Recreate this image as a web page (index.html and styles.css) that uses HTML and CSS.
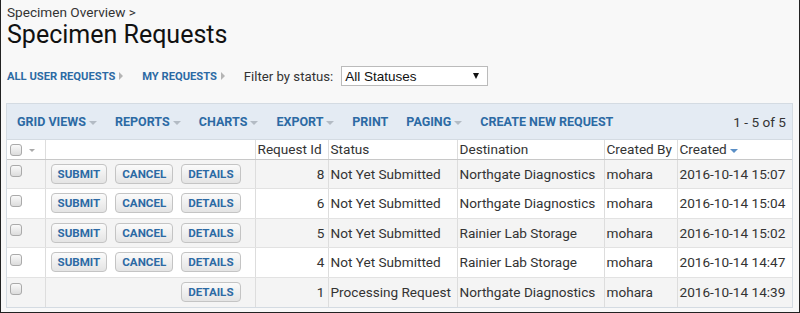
FILE: index.html
```html
<!DOCTYPE html>
<html>
  <head>
    <meta name="viewport" content="width=device-width, initial-scale=1" />
    <link rel="stylesheet" href="styles.css">
  </head>
  <body>
    <div class="frame">
      <div class="crumb">Specimen Overview &gt;</div>
      <h1>Specimen Requests</h1>

      <div class="links">
        <a href="#" class="nav">ALL USER REQUESTS <span class="tri-right"></span></a>
        <a href="#" class="nav">MY REQUESTS <span class="tri-right"></span></a>
        <label for="status">Filter by status:</label>
        <div class="select" id="status">
          <span>All Statuses</span>
          <span class="tri-down"></span>
        </div>
      </div>

      <div class="grid">
        <div class="toolbar">
          <a href="#" class="menu">GRID VIEWS <span class="caret"></span></a>
          <a href="#" class="menu">REPORTS <span class="caret"></span></a>
          <a href="#" class="menu">CHARTS <span class="caret"></span></a>
          <a href="#" class="menu">EXPORT <span class="caret"></span></a>
          <a href="#" class="menu">PRINT</a>
          <a href="#" class="menu">PAGING <span class="caret"></span></a>
          <a href="#" class="menu">CREATE NEW REQUEST</a>
          <span class="count">1 - 5 of 5</span>
        </div>
        <table>
          <thead>
            <tr>
              <th class="c-check"><span class="box"></span><span class="caret"></span></th>
              <th class="c-actions"></th>
              <th class="c-id">Request Id</th>
              <th class="c-status">Status</th>
              <th class="c-dest">Destination</th>
              <th class="c-by">Created By</th>
              <th class="c-created">Created <span class="sort"></span></th>
            </tr>
          </thead>
          <tbody>
            <tr class="alt">
              <td><span class="box"></span></td>
              <td class="actions"><button>SUBMIT</button><button>CANCEL</button><button>DETAILS</button></td>
              <td class="num">8</td>
              <td>Not Yet Submitted</td>
              <td>Northgate Diagnostics</td>
              <td>mohara</td>
              <td>2016-10-14 15:07</td>
            </tr>
            <tr>
              <td><span class="box"></span></td>
              <td class="actions"><button>SUBMIT</button><button>CANCEL</button><button>DETAILS</button></td>
              <td class="num">6</td>
              <td>Not Yet Submitted</td>
              <td>Northgate Diagnostics</td>
              <td>mohara</td>
              <td>2016-10-14 15:04</td>
            </tr>
            <tr class="alt">
              <td><span class="box"></span></td>
              <td class="actions"><button>SUBMIT</button><button>CANCEL</button><button>DETAILS</button></td>
              <td class="num">5</td>
              <td>Not Yet Submitted</td>
              <td>Rainier Lab Storage</td>
              <td>mohara</td>
              <td>2016-10-14 15:02</td>
            </tr>
            <tr>
              <td><span class="box"></span></td>
              <td class="actions"><button>SUBMIT</button><button>CANCEL</button><button>DETAILS</button></td>
              <td class="num">4</td>
              <td>Not Yet Submitted</td>
              <td>Rainier Lab Storage</td>
              <td>mohara</td>
              <td>2016-10-14 14:47</td>
            </tr>
            <tr class="alt">
              <td><span class="box"></span></td>
              <td class="actions"><button class="hidden">SUBMIT</button><button class="hidden">CANCEL</button><button>DETAILS</button></td>
              <td class="num">1</td>
              <td>Processing Request</td>
              <td>Northgate Diagnostics</td>
              <td>mohara</td>
              <td>2016-10-14 14:39</td>
            </tr>
          </tbody>
        </table>
      </div>
    </div>
  </body>
</html>
```

FILE: styles.css
```css
* {
  box-sizing: border-box;
}

html,
body {
  margin: 0;
  background-color: #f8f8f8;
}

body {
  font-family: Roboto, "Liberation Sans", sans-serif;
  color: #333;
}

.frame {
  width: 800px;
  height: 313px;
  border: 1px solid #222;
  border-top: none;
  padding: 4px 6px 0 5px;
  overflow: hidden;
}

.crumb {
  font-size: 13.6px;
  line-height: 16px;
  padding-left: 1px;
  color: #333;
}

h1 {
  margin: 1px 0 0 1px;
  font-size: 25px;
  font-weight: 400;
  line-height: 28px;
  color: #111;
}

.links {
  display: flex;
  align-items: center;
  height: 20px;
  margin-top: 17px;
  padding-left: 1px;
}

.nav {
  font-size: 11.2px;
  font-weight: 700;
  color: #2c6aa4;
  text-decoration: none;
  margin-right: 19px;
}

.tri-right {
  display: inline-block;
  width: 0;
  height: 0;
  border-top: 4px solid transparent;
  border-bottom: 4px solid transparent;
  border-left: 4px solid #b5b5b5;
  margin-left: 1px;
}

label {
  font-size: 13.2px;
  color: #333;
  margin-right: 8px;
}

.select {
  width: 147px;
  height: 20px;
  border: 1px solid #bbb;
  background-color: #fff;
  display: flex;
  align-items: center;
  justify-content: space-between;
  padding: 0 8px 0 3px;
  font-family: "Liberation Sans", Arial, sans-serif;
  font-size: 13.5px;
  color: #111;
}

.tri-down {
  width: 0;
  height: 0;
  border-left: 3px solid transparent;
  border-right: 3px solid transparent;
  border-top: 6px solid #111;
}

.grid {
  margin-top: 17px;
  width: 787px;
  border: 1px solid #d4dbe2;
}

.toolbar {
  display: flex;
  align-items: center;
  height: 36px;
  background-color: #e4ebf3;
  padding: 0 6px 0 10px;
  border-bottom: 1px solid #d4dbe2;
}

.menu {
  font-size: 12.5px;
  font-weight: 700;
  color: #2c6aa4;
  text-decoration: none;
  margin-right: 18px;
}

.caret {
  display: inline-block;
  width: 0;
  height: 0;
  border-left: 4px solid transparent;
  border-right: 4px solid transparent;
  border-top: 4px solid #b3bbc4;
  vertical-align: middle;
}

.count {
  margin-left: auto;
  font-size: 13.6px;
  color: #333;
}

table {
  width: 100%;
  border-collapse: collapse;
  font-size: 13.6px;
  table-layout: fixed;
}

th,
td {
  padding: 0 3px 0 2px;
  border-left: 1px solid #ddd;
  text-align: left;
  white-space: nowrap;
  color: #333;
}

th:first-child,
td:first-child {
  border-left: none;
}

th {
  font-weight: 400;
  height: 19px;
  background-color: #fff;
  border-bottom: 1px solid #c8c8c8;
}

td {
  height: 29.5px;
  border-bottom: 1px solid #e2e2e2;
}

tbody tr {
  background-color: #fff;
}

tbody tr.alt {
  background-color: #f4f4f4;
}

tbody tr:last-child td {
  border-bottom: none;
}

.c-check {
  width: 38px;
}

.c-actions {
  width: 210px;
}

.c-id {
  width: 73px;
}

.c-status {
  width: 129px;
}

.c-dest {
  width: 147px;
}

.c-by {
  width: 73px;
}

.num {
  text-align: right;
}

.box {
  display: inline-block;
  width: 12px;
  height: 12px;
  border: 1px solid #aaa;
  border-radius: 3px;
  background: linear-gradient(#fafafa, #dcdcdc);
  vertical-align: middle;
  position: relative;
  top: -4px;
  margin-left: 1px;
}

th .box {
  top: -1px;
  margin-right: 7px;
}

th .caret {
  border-top: 3px solid #aaa;
  border-left-width: 3px;
  border-right-width: 3px;
}

.sort {
  display: inline-block;
  width: 0;
  height: 0;
  border-left: 4px solid transparent;
  border-right: 4px solid transparent;
  border-top: 4px solid #5b8fc6;
  vertical-align: middle;
}

.actions {
  padding-left: 5px;
}

button {
  height: 20px;
  padding: 0 6px;
  margin-right: 8px;
  border: 1px solid #c4c4c4;
  border-radius: 4px;
  background: linear-gradient(#fbfbfb, #e4e4e4);
  font-family: Roboto, "Liberation Sans", sans-serif;
  font-size: 11.6px;
  font-weight: 700;
  color: #2c6aa4;
  cursor: pointer;
}

button.hidden {
  visibility: hidden;
}
```
